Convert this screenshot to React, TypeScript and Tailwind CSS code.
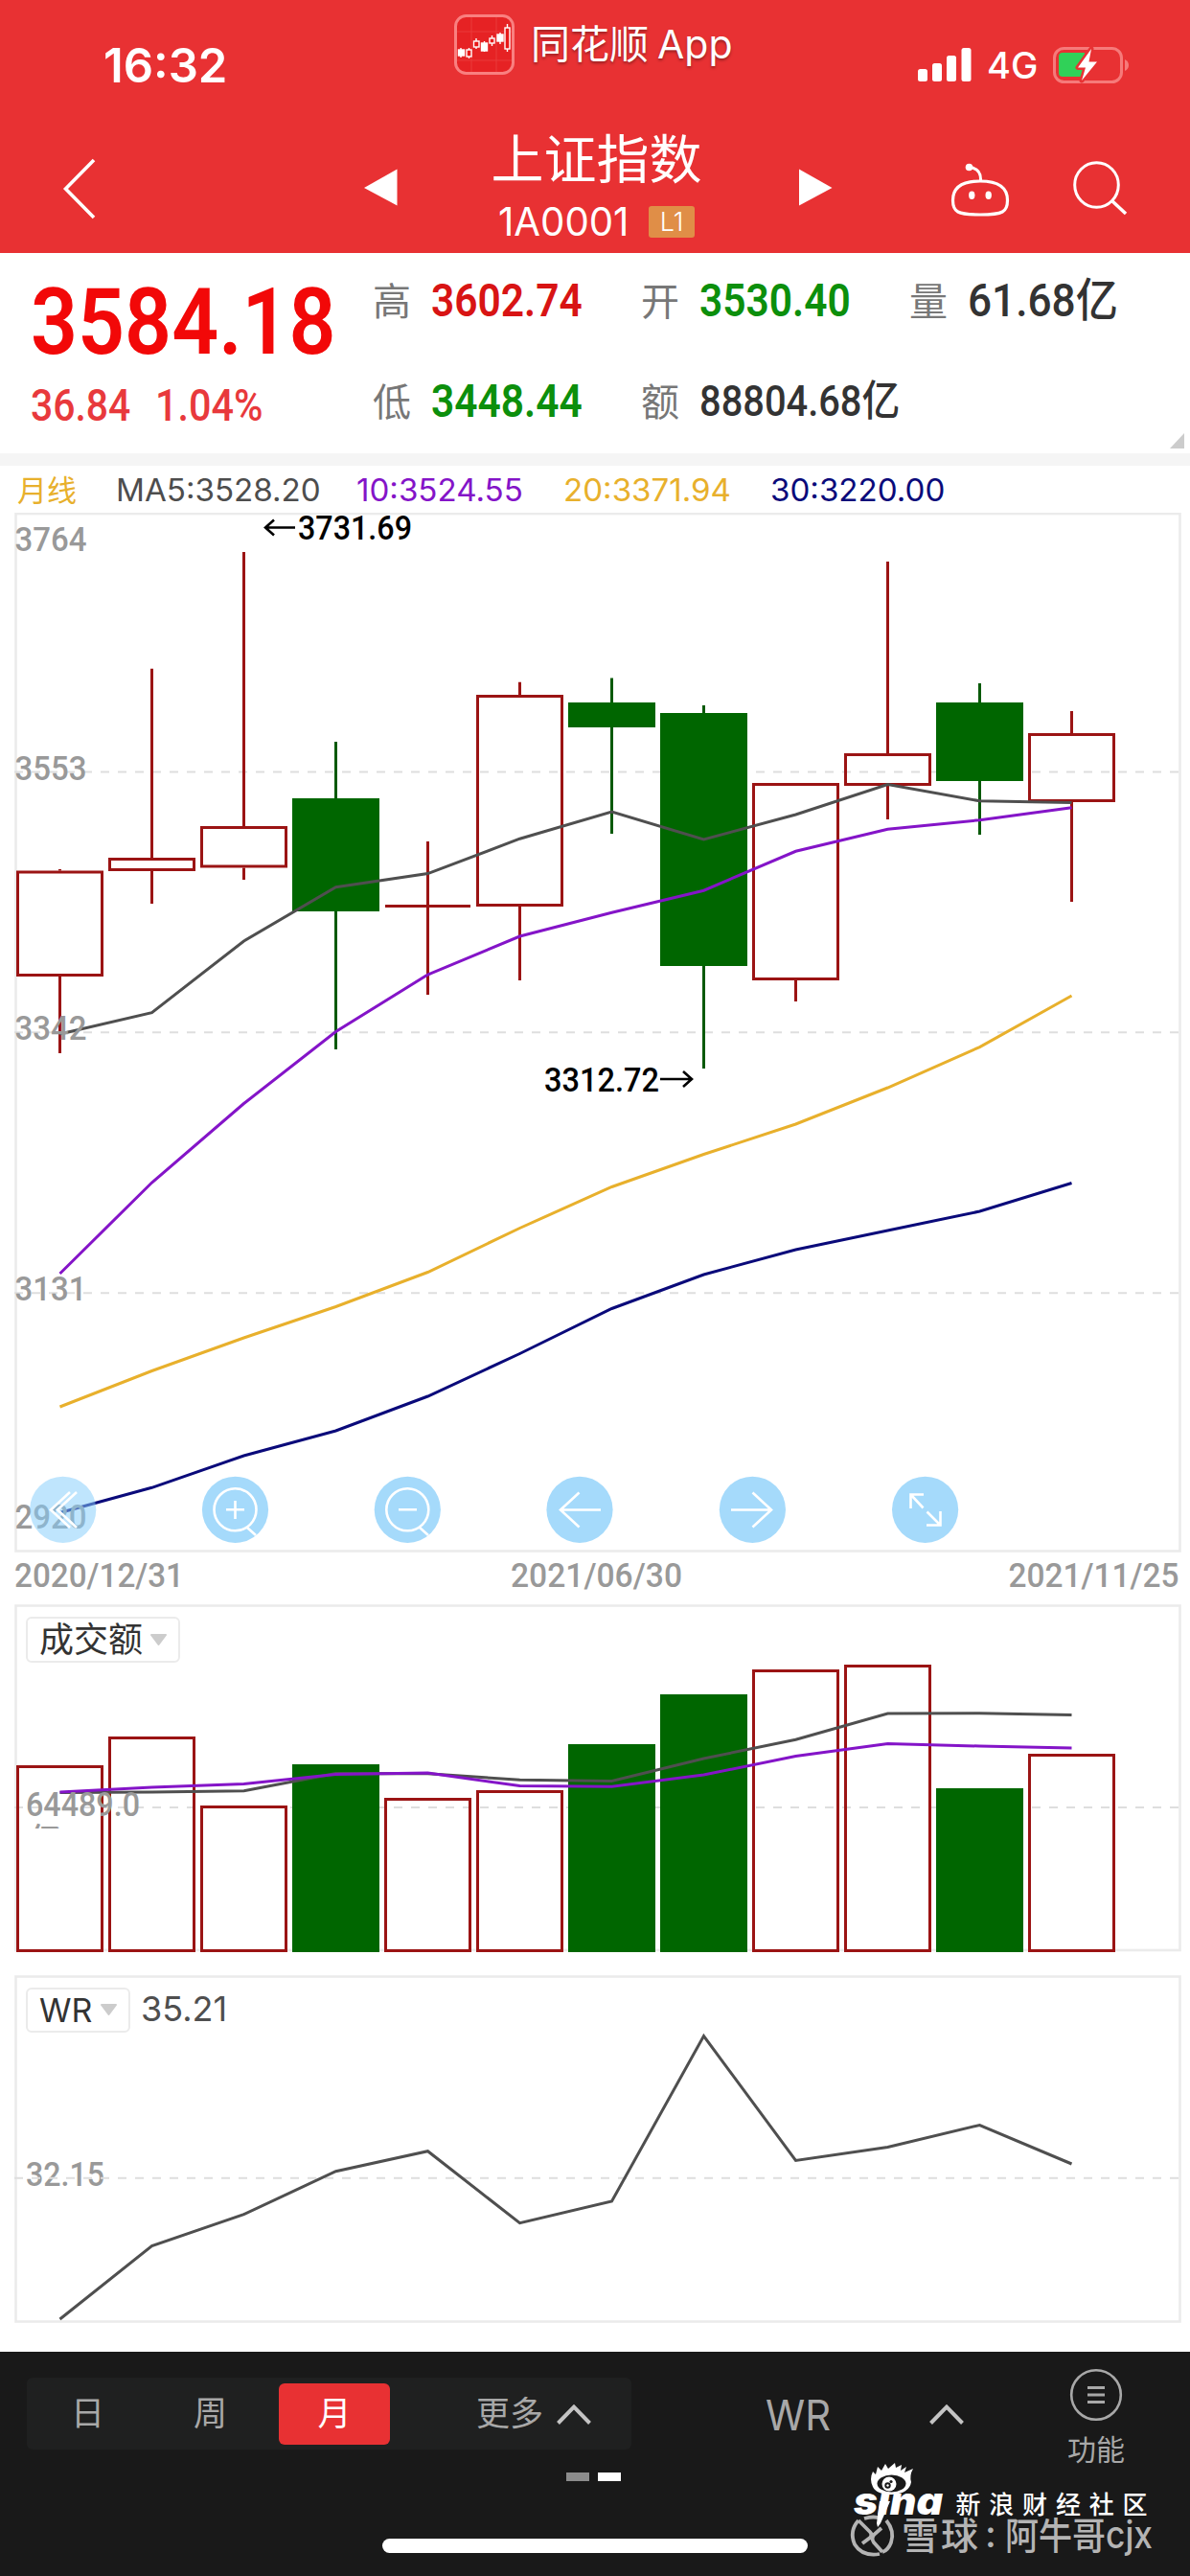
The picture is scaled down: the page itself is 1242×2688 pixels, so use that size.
/**
 * 指数行情月线页面
 */

import React from 'react';
import { clsx } from 'clsx';

const SANS = "font-['Inter','Noto_Sans_CJK_SC',sans-serif]";
const DIN = "font-['Roboto','Noto_Sans_CJK_SC',sans-serif]";

const RED = '#9b1414';
const GREEN = '#006600';
const GRAY = '#4f4f4f';
const PURPLE = '#8414c8';
const ORANGE = '#e8b02c';
const NAVY = '#0a0a7a';

// 每根K线的中心间距
const candleX = (index: number) => 62.5 + index * 96;

interface Candle {
  up: boolean;
  high: number;
  low: number;
  top: number;
  bottom: number;
}

const candles: Candle[] = [
  { up: true, high: 907, top: 908.5, bottom: 1019, low: 1099 },
  { up: true, high: 697.7, top: 895, bottom: 909, low: 943 },
  { up: true, high: 576, top: 862, bottom: 905.5, low: 918 },
  { up: false, high: 774, top: 833, bottom: 951, low: 1095 },
  { up: true, high: 878, top: 944, bottom: 947, low: 1038 },
  { up: true, high: 711.8, top: 725, bottom: 946, low: 1023 },
  { up: false, high: 707.6, top: 733, bottom: 759, low: 870 },
  { up: false, high: 736, top: 744, bottom: 1008, low: 1115 },
  { up: true, high: 817, top: 817, bottom: 1023, low: 1045 },
  { up: true, high: 586, top: 786, bottom: 820, low: 855 },
  { up: false, high: 713, top: 733, bottom: 815, low: 871 },
  { up: true, high: 742, top: 765, bottom: 837, low: 941 },
];

const priceLines = [
  { color: GRAY, values: [1079, 1056.6, 982, 925.8, 911.6, 875.2, 847, 876, 850, 818.6, 835.8, 837.4] },
  { color: PURPLE, values: [1329, 1234, 1151.5, 1076.6, 1017, 977, 952.2, 929.2, 888.3, 865.3, 855.7, 842.7] },
  { color: ORANGE, values: [1468, 1430.5, 1396, 1363.5, 1327.5, 1281.5, 1238.5, 1204.5, 1173, 1135, 1092.6, 1039] },
  { color: NAVY, values: [1578.5, 1552.3, 1519, 1493, 1457, 1412.5, 1365.5, 1330, 1304, 1284, 1264, 1234.5] },
];

const volumes = [1842, 1812, 1884, 1841, 1876, 1868, 1820, 1768, 1742, 1737, 1866, 1830];

const volumeLines = [
  { color: GRAY, values: [1870.4, 1870, 1868.8, 1850.5, 1850.8, 1857.3, 1858.5, 1835, 1815.2, 1788, 1787.7, 1789.6] },
  { color: PURPLE, values: [1870, 1865, 1861.6, 1851.6, 1850, 1863.5, 1864.2, 1852, 1832.5, 1819.5, 1822, 1824] },
];

const wrLine = [2420, 2343.7, 2310.7, 2265.7, 2244.7, 2319.7, 2297, 2124.5, 2254.5, 2240.5, 2217.5, 2258];

const Line: React.FC<{ values: number[]; color: string }> = ({ values, color }) => (
  <polyline
    points={values.map((y, i) => `${candleX(i)},${y}`).join(' ')}
    fill="none"
    stroke={color}
    strokeWidth={3}
  />
);

const GridLine: React.FC<{ y: number }> = ({ y }) => (
  <line x1={15} x2={1233} y1={y} y2={y} stroke="#dedede" strokeWidth={2} strokeDasharray="9 9" />
);

interface LabelProps {
  x: number;
  y: number;
  width: number;
  color?: string;
  children: React.ReactNode;
}

const Label: React.FC<LabelProps> = ({ x, y, width, color = '#999999', children }) => (
  <text
    x={x}
    y={y}
    textLength={width}
    lengthAdjust="spacingAndGlyphs"
    fill={color}
    fontSize={34.5}
    className={clsx(DIN, 'font-medium')}
  >
    {children}
  </text>
);

const StatusBar: React.FC = () => (
  <div className="flex h-[136px] items-center">
    <div className="w-[474px] pl-[108px]">
      <span className="inline-block origin-left text-[49px] font-semibold leading-none">16:32</span>
    </div>
    <div className="mt-[15px] flex h-[63px] w-[484px] self-start">
      <svg width="63" height="63" viewBox="0 0 63 63">
        <rect x="1.5" y="1.5" width="60" height="60" rx="11" fill="#e62224" stroke="#f98080" strokeWidth="3" />
        <path d="M18 3V60M44 3V60M3 18H60M3 48H60" stroke="#ea3a3a" strokeWidth="1" />
        <path d="M7 35V45M15.500 35V46M23 25V36M31.500 28V39M39.500 22V33M48 19V31M55.500 10V39" stroke="#fff" strokeWidth="1.400" />
        <g stroke="#fff" strokeWidth="1.400">
          <rect x="4.500" y="37" width="6" height="6" fill="#fff" />
          <rect x="13" y="37" width="5" height="7" fill="#e81818" />
          <rect x="20.500" y="28" width="5.500" height="6" fill="#e81818" />
          <rect x="28.500" y="30" width="6" height="8" fill="#fff" />
          <rect x="37" y="25" width="5" height="5" fill="#e81818" />
          <rect x="45" y="21" width="6" height="7" fill="#fff" />
          <rect x="53" y="14" width="5" height="22" fill="#e81818" />
        </g>
      </svg>
      <div className="ml-[17px] flex h-[63px] items-center whitespace-nowrap text-[41px] leading-none">
        <span className="[text-shadow:0_2px_3px_rgba(0,0,0,.35)]">同花顺</span>
        <span className="ml-[9px] inline-block origin-left [text-shadow:0_2px_3px_rgba(0,0,0,.35)]">App</span>
      </div>
    </div>
    <div className="flex items-center">
      <svg width="56" height="36" viewBox="0 0 56 36" fill="#fff">
        <rect x="0" y="22" width="10" height="13" rx="2.500" />
        <rect x="15" y="16" width="10" height="19" rx="2.500" />
        <rect x="30" y="8" width="10" height="27" rx="2.500" />
        <rect x="45.500" y="0" width="10" height="35" rx="2.500" />
      </svg>
      <span className="ml-[16px] w-[69px] text-[38px] font-medium leading-none">
        <span className="inline-block origin-left">4G</span>
      </span>
      <svg width="82" height="38" viewBox="0 0 82 38">
        <rect x="1.500" y="1.500" width="70" height="35" rx="10" fill="none" stroke="#f67a7a" strokeWidth="3" />
        <path d="M75 13Q79 15 79 19Q79 23 75 25Z" fill="#f67a7a" />
        <path d="M10 6H33V31H10Q6 31 6 27V10Q6 6 10 6Z" fill="#30d158" />
        <path
          d="M40 2L26 21.500H34L30 35L46 15.500H37.500Z"
          fill="#fff"
          stroke="#e83133"
          strokeWidth="5"
          strokeLinejoin="round"
          paintOrder="stroke"
        />
      </svg>
    </div>
  </div>
);

const NavBar: React.FC = () => (
  <div className="flex h-[128px] items-start">
    <svg width="380" height="128" viewBox="0 0 380 128">
      <path d="M98 31L68.500 61L98 91" fill="none" stroke="#fff" strokeWidth="3.600" />
    </svg>
    <svg width="35" height="128" viewBox="0 0 35 128">
      <path d="M0 60L34.500 40.500V78.500Z" fill="#fff" />
    </svg>
    <div className="w-[419px]">
      <div className="ml-[-4px] text-center text-[55px] leading-[60px]">上证指数</div>
      <div className="ml-[105px] flex h-[70px] items-center">
        <span className="w-[157px] leading-none">
          <span className="inline-block origin-left scale-x-[.98] text-[41px]">1A0001</span>
        </span>
        <span className="flex h-[33px] w-[48px] items-center justify-center rounded-[3px] bg-[#e08e47] text-[27px] font-light leading-none">
          L1
        </span>
      </div>
    </div>
    <svg width="408" height="128" viewBox="834 136 408 128" fill="none" stroke="#fff">
      <path d="M834 176.500L868.500 196L834 214.500Z" fill="#fff" stroke="none" />
      <path
        d="M1023 189C1044 189 1051.500 197 1051.500 209C1051.500 221 1047 224 1023 224C999 224 994.500 221 994.500 209C994.500 197 1002 189 1023 189Z"
        strokeWidth="3.200"
      />
      <path d="M1012 174.500Q1024 176 1023.500 188" strokeWidth="3" />
      <circle cx="1011.500" cy="174.500" r="3.800" fill="#fff" stroke="none" />
      <ellipse cx="1014.300" cy="203.700" rx="3.200" ry="4.200" fill="#fff" stroke="none" />
      <ellipse cx="1031.700" cy="203.700" rx="3.200" ry="4.200" fill="#fff" stroke="none" />
      <ellipse cx="1144.500" cy="193" rx="22.800" ry="23.300" strokeWidth="3" />
      <path d="M1160 209L1175 223" strokeWidth="3.500" />
    </svg>
  </div>
);

interface QuoteProps {
  label: string;
  value: string;
  unit?: string;
  className?: string;
}

const Quote: React.FC<QuoteProps> = ({ label, value, unit, className }) => (
  <div className="flex h-[50px] items-center whitespace-nowrap leading-none">
    <span className="w-[61px] shrink-0 text-[40px] text-[#777]">{label}</span>
    <span className={clsx('mt-[-3px] inline-block shrink-0 origin-left', DIN, className)}>
      {value}
      {unit}
    </span>
  </div>
);

const QuotePanel: React.FC = () => (
  <div className="flex h-[209px] bg-white">
    <div className="w-[389px] pl-[32px] pt-[23px]">
      <div className={clsx('origin-left scale-x-[.885] whitespace-nowrap text-[97px] font-semibold leading-[98px] text-[#f20808]', DIN)}>
        3584.18
      </div>
      <div className={clsx('mt-[12px] flex text-[47px] font-medium leading-[52px] text-[#e8393c]', DIN)}>
        <span className="w-[130px]">
          <span className="inline-block origin-left scale-x-[.87]">36.84</span>
        </span>
        <span className="inline-block origin-left scale-x-[.88]">1.04%</span>
      </div>
    </div>
    <div className="w-[280px] pt-[26px]">
      <Quote label="高" value="3602.74" className="scale-x-[.885] text-[48px] font-semibold text-[#d81414]" />
      <div className="h-[55px]" />
      <Quote label="低" value="3448.44" className="scale-x-[.885] text-[48px] font-semibold text-[#0c8f0c]" />
    </div>
    <div className="w-[280px] pt-[26px]">
      <Quote label="开" value="3530.40" className="scale-x-[.885] text-[48px] font-semibold text-[#0c8f0c]" />
      <div className="h-[55px]" />
      <Quote label="额" value="88804.68" unit="亿" className="scale-x-[.905] text-[44px] font-medium text-[#333]" />
    </div>
    <div className="flex flex-1 flex-col pt-[26px]">
      <Quote label="量" value="61.68" unit="亿" className="scale-x-[.92] text-[48px] font-medium text-[#333]" />
      <svg className="ml-auto mr-[6px] mt-auto mb-[5px]" width="15" height="16" viewBox="0 0 15 16">
        <path d="M15 0V16H0Z" fill="#ccc" />
      </svg>
    </div>
  </div>
);

const maItems = [
  { text: 'MA5:3528.20', cell: 'w-[251px] text-[#4d4d4d]' },
  { text: '10:3524.55', cell: 'w-[216px] text-[#8414c8]' },
  { text: '20:3371.94', cell: 'w-[216px] text-[#e8b02c]' },
  { text: '30:3220.00', cell: 'w-[200px] text-[#0a0a7a]' },
];

const MaLegend: React.FC = () => (
  <div className="flex h-[49px] items-center whitespace-nowrap bg-white pl-[18px] pt-[2px] text-[32px] leading-none">
    <span className="w-[103px] text-[31px] text-[#e8b02c]">月线</span>
    {maItems.map((item) => (
      <span key={item.text} className={item.cell}>
        <span className="inline-block origin-left scale-x-[1.035]">{item.text}</span>
      </span>
    ))}
  </div>
);

const Wick: React.FC<{ x: number; candle: Candle }> = ({ x, candle }) => (
  <path
    d={`M${x} ${candle.high}V${candle.top}M${x} ${candle.bottom}V${candle.low}`}
    stroke={candle.up ? RED : '#0a5a0a'}
    strokeWidth={3}
  />
);

const PriceChart: React.FC = () => (
  <svg className="mx-[15px]" width="1218" height="1085" viewBox="15 535 1218 1085">
    <rect x="16.500" y="536" width="1215" height="1082.500" fill="#fff" stroke="#ebebeb" strokeWidth="2.600" />
    <GridLine y={805.6} />
    <GridLine y={1077.3} />
    <GridLine y={1349.3} />
    {candles.map((candle, i) => {
      const x = candleX(i);
      return (
        <g key={x}>
          <Wick x={x} candle={candle} />
          {candle.bottom - candle.top < 5 ? (
            <path d={`M${x - 44.5} 945.500H${x + 44.5}M${x} ${candle.top}V${candle.bottom}`} stroke={RED} strokeWidth={3} />
          ) : candle.up ? (
            <rect
              x={x - 44}
              y={candle.top + 1.5}
              width={88}
              height={candle.bottom - candle.top - 3}
              fill="none"
              stroke={RED}
              strokeWidth={3}
            />
          ) : (
            <rect x={x - 45.5} y={candle.top} width={91} height={candle.bottom - candle.top} fill={GREEN} />
          )}
        </g>
      );
    })}
    {priceLines.map((line) => (
      <Line key={line.color} {...line} />
    ))}
    <Label x={15.5} y={575} width={75}>3764</Label>
    <Label x={15.5} y={813.5} width={75}>3553</Label>
    <Label x={15.5} y={1085} width={75}>3342</Label>
    <Label x={15.5} y={1357} width={75}>3131</Label>
    <Label x={15.5} y={1595} width={75}>2920</Label>
    <path d="M308 550.500H277M286 542.500L277 550.500L286 558.500" fill="none" stroke="#000" strokeWidth="2.600" />
    <Label x={311} y={562.5} width={119} color="#000">3731.69</Label>
    <Label x={568} y={1138.5} width={120} color="#000">3312.72</Label>
    <path d="M689 1126H722M713 1118L722 1126L713 1134" fill="none" stroke="#000" strokeWidth="2.600" />
    <g fill="none" stroke="#fff" strokeWidth="2.600">
      <circle cx="65.700" cy="1575.300" r="34.600" fill="#84cdfb" fillOpacity=".52" stroke="none" />
      <path d="M73 1557L53 1575.500L73 1594M80 1557L60 1575.500L80 1594" />
      {[245.5, 425.3, 605, 785.4, 965.6].map((cx) => (
        <circle key={cx} cx={cx} cy="1575.300" r="34.600" fill="#a5dafb" stroke="none" />
      ))}
      <circle cx="245.500" cy="1575.300" r="22" />
      <path d="M236 1575.300H255M245.500 1566V1585M258 1594L267 1602" />
      <circle cx="425.300" cy="1575.300" r="22" />
      <path d="M416 1575.300H435M438 1594L447 1602" />
      <path d="M627 1575.500H585M604.500 1557.500L585 1575.500L604.500 1593.500" />
      <path d="M763 1575.500H805M785.500 1557.500L805 1575.500L785.500 1593.500" />
      <path d="M964 1559.500H950.500V1574M950.500 1559.500L963.500 1573.500M967.500 1577.500L981.500 1591.500M981.500 1577V1591.500H967" />
    </g>
  </svg>
);

const DateAxis: React.FC = () => (
  <svg className="mx-[15px]" width="1218" height="54" viewBox="15 1620 1218 54">
    <Label x={15} y={1656} width={177}>2020/12/31</Label>
    <Label x={533} y={1656} width={179}>2021/06/30</Label>
    <Label x={1052.5} y={1656} width={178}>2021/11/25</Label>
  </svg>
);

interface IndicatorTagProps {
  name: string;
  className: string;
}

const IndicatorTag: React.FC<IndicatorTagProps> = ({ name, className }) => (
  <div
    className={clsx(
      'absolute left-[12px] flex items-center justify-between rounded-[6px] border-[2.5px] border-[#ebebeb] bg-white pl-[12px] pr-[11px] leading-none text-[#333]',
      className,
    )}
  >
    <span className="whitespace-nowrap">{name}</span>
    <svg width="19" height="13" viewBox="0 0 19 13">
      <path d="M2 1H17L9.500 11Z" fill="#ccc" stroke="#ccc" strokeWidth="2" strokeLinejoin="round" />
    </svg>
  </div>
);

const VolumeChart: React.FC = () => (
  <div className="relative mx-[15px] h-[364px]">
    <svg width="1218" height="364" viewBox="15 1674 1218 364">
      <rect x="16.500" y="1675.500" width="1215" height="359.500" fill="#fff" stroke="#ebebeb" strokeWidth="2.600" />
      <GridLine y={1886} />
      {volumes.map((top, i) =>
        candles[i].up ? (
          <rect key={i} x={candleX(i) - 44} y={top + 1.5} width={88} height={2035.5 - top - 1.5} fill="none" stroke={RED} strokeWidth={3} />
        ) : (
          <rect key={i} x={candleX(i) - 45.5} y={top} width={91} height={2037 - top} fill={GREEN} />
        ),
      )}
      {volumeLines.map((line) => (
        <Line key={line.color} {...line} />
      ))}
      <Label x={27} y={1894.5} width={119}>64489.0</Label>
      <clipPath id="unit-clip">
        <rect x="15" y="1896" width="100" height="12" />
      </clipPath>
      <g clipPath="url(#unit-clip)">
        <Label x={30} y={1932} width={34}>亿</Label>
      </g>
    </svg>
    <IndicatorTag name="成交额" className="top-[13px] h-[48px] w-[161px] text-[36px]" />
  </div>
);

const WrChart: React.FC = () => (
  <div className="relative mx-[15px] mt-[23px] h-[364px]">
    <svg width="1218" height="364" viewBox="15 2061 1218 364">
      <rect x="16.500" y="2062.500" width="1215" height="360" fill="#fff" stroke="#ebebeb" strokeWidth="2.600" />
      <Label x={27} y={2280.5} width={82}>32.15</Label>
      <GridLine y={2272.7} />
      <Line values={wrLine} color={GRAY} />
    </svg>
    <IndicatorTag name="WR" className="top-[13px] h-[47px] w-[109px] text-[34px]" />
    <span className="absolute left-[132px] top-[17px] text-[36px] leading-none text-[#4f4f4f]">35.21</span>
  </div>
);

const Chevron: React.FC = () => (
  <svg width="38" height="24" viewBox="0 0 38 24">
    <path d="M2.500 21.500L19 4.500L35.500 21.500" fill="none" stroke="#c4c4c4" strokeWidth="4" />
  </svg>
);

const Watermark: React.FC = () => (
  <div className="absolute left-[880px] top-[111px] h-[115px] w-[340px]">
    <svg width="340" height="115" viewBox="0 0 340 115">
      <g fill="none" stroke="#b4b4b4" strokeWidth="3.800">
        <path d="M22 63Q32 60 40 63M45 65Q54 76 50 88Q47 96 41 98M16 65Q6 76 12 90Q20 103 38 100" />
        <path d="M16 65L28 77Q31 80 28 83L20 89M41 98L32 88Q29 84 32 80L40 73" />
      </g>
      <g fill="#fff">
        <text
          x="11"
          y="59"
          textLength="93"
          lengthAdjust="spacingAndGlyphs"
          fontSize="40"
          className="font-['Inter','Liberation_Sans',sans-serif] font-black italic"
        >
          sina
        </text>
        <path d="M38 45H49L39 68L36 72L35 68Z" />
        <path d="M31 30Q27 22 31 14L34 17L36 9L40 13L44 6L47 11L54 5L55 10L61 7L60 13L66 9L64 15L73 11Q69 18 71 25Q69 37 51 38Q35 38 31 30Z" />
        <ellipse cx="50.500" cy="26.500" rx="15" ry="9" fill="#191919" />
        <circle cx="48" cy="27" r="7.500" />
        <circle cx="46.500" cy="28.500" r="3.200" fill="#191919" />
        <circle cx="50" cy="24.500" r="1.600" fill="#191919" />
        <circle cx="46.500" cy="28.500" r="1.200" />
      </g>
      <text x="117.500" y="57.500" textLength="200" fontSize="26" fill="#fff" className={clsx(SANS, 'font-medium')}>
        新浪财经社区
      </text>
      <g fill="#b4b4b4" fontSize="39" className={clsx(SANS, 'font-medium')}>
        <text x="61" y="95" textLength="80">雪球</text>
        <text x="148" y="93">:</text>
        <text x="169" y="95" textLength="105" lengthAdjust="spacingAndGlyphs">阿牛哥</text>
        <text x="274" y="94" textLength="49" lengthAdjust="spacingAndGlyphs">cjx</text>
      </g>
    </svg>
  </div>
);

const periods = [
  { name: '日', cell: 'w-[127px]' },
  { name: '周', cell: 'w-[129px]' },
];

const BottomBar: React.FC = () => (
  <div className="relative h-[234px] bg-[#191919] text-[#a8a8a8]">
    <div className="flex">
      <div className="ml-[28px] mt-[27px] flex h-[75px] w-[631px] items-center rounded-[6px] bg-[#1f2020] text-[35px] leading-none">
        {periods.map((period) => (
          <span key={period.name} className={clsx('text-center', period.cell)}>
            {period.name}
          </span>
        ))}
        <span className="ml-[7px] flex h-[64px] w-[116px] items-center justify-center rounded-[6px] bg-[#e83133] text-white">月</span>
        <span className="ml-[90px] mr-[13px]">更多</span>
        <Chevron />
      </div>
      <div className="ml-[140px] mt-[27px] flex h-[75px] items-center">
        <span className="w-[170px] pt-[3px] text-[44px] leading-none">
          <span className="inline-block origin-left scale-x-[.95]">WR</span>
        </span>
        <Chevron />
      </div>
      <div className="ml-[106px] mt-[17px] flex w-[62px] flex-col items-center">
        <svg width="56" height="56" viewBox="0 0 56 56" fill="none" stroke="#a8a8a8">
          <circle cx="28" cy="28" r="25.800" strokeWidth="2.600" />
          <path d="M19 20.500H37M19 28H37M19 35.500H37" strokeWidth="3" />
        </svg>
        <span className="mt-[14px] whitespace-nowrap text-[30px] leading-none">功能</span>
      </div>
    </div>
    <div className="absolute left-[591px] top-[126px] flex gap-[9px]">
      <span className="h-[9px] w-[24px] bg-[#8c8c8c]" />
      <span className="h-[9px] w-[24px] bg-white" />
    </div>
    <div className="absolute left-[399px] top-[195px] h-[15px] w-[444px] rounded-full bg-white" />
    <Watermark />
  </div>
);

const App: React.FC = () => {
  return (
    <div className={clsx('flex h-[2688px] w-[1242px] flex-col overflow-hidden bg-white', SANS)}>
      <header className="h-[264px] bg-[#e83133] text-white">
        <StatusBar />
        <NavBar />
      </header>
      <QuotePanel />
      <div className="h-[13px] bg-[#f5f5f5]" />
      <MaLegend />
      <PriceChart />
      <DateAxis />
      <VolumeChart />
      <WrChart />
      <div className="flex-1" />
      <BottomBar />
    </div>
  );
};

export default App;
